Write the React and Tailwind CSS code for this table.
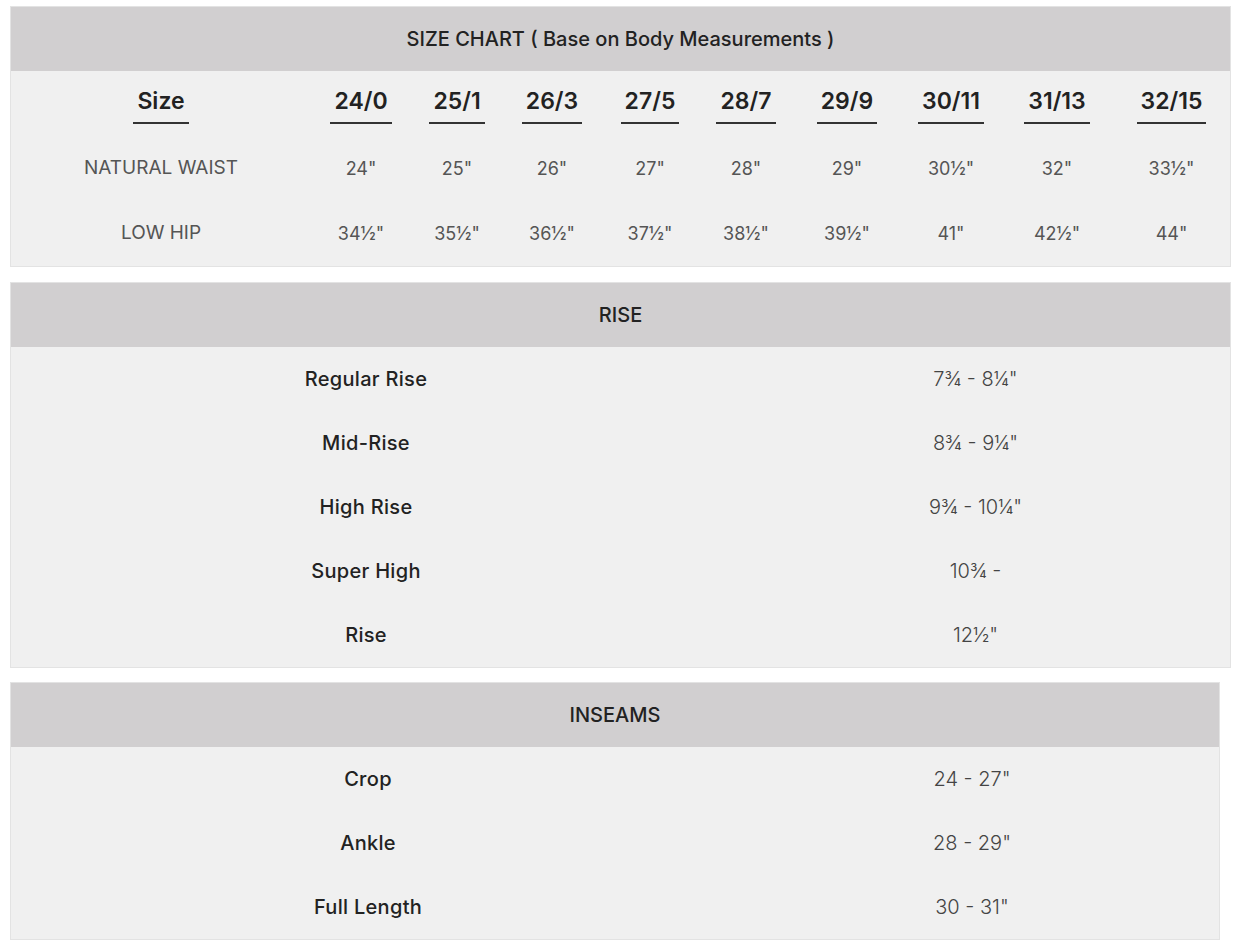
import React from "react";

const SIZES = ["24/0", "25/1", "26/3", "27/5", "28/7", "29/9", "30/11", "31/13", "32/15"];

const MEASUREMENTS = [
  {
    label: "NATURAL WAIST",
    values: ["24\"", "25\"", "26\"", "27\"", "28\"", "29\"", "30½\"", "32\"", "33½\""],
  },
  {
    label: "LOW HIP",
    values: ["34½\"", "35½\"", "36½\"", "37½\"", "38½\"", "39½\"", "41\"", "42½\"", "44\""],
  },
];

const RISES = [
  ["Regular Rise", "7¾ - 8¼\""],
  ["Mid-Rise", "8¾ - 9¼\""],
  ["High Rise", "9¾ - 10¼\""],
  ["Super High", "10¾ -"],
  ["Rise", "12½\""],
];

const INSEAMS = [
  ["Crop", "24 - 27\""],
  ["Ankle", "28 - 29\""],
  ["Full Length", "30 - 31\""],
];

const FONT = "font-['Inter','Liberation_Sans',sans-serif]";

function TableHeader({ children }) {
  return (
    <div className="h-16 flex items-center justify-center bg-[#d1cfd0] text-[20px] font-medium text-[#222]">
      {children}
    </div>
  );
}

function TwoColTable({ title, rows, cols, width }) {
  return (
    <div className={`${width} border border-[#e3e3e3] bg-[#f0f0f0]`}>
      <TableHeader>{title}</TableHeader>
      {rows.map(([label, value]) => (
        <div key={label} className={`grid ${cols} h-16 items-center text-center`}>
          <span className="text-[20px] font-medium text-[#222] tracking-[0.3px]">{label}</span>
          <span className="text-[20px] font-light text-[#444]">{value}</span>
        </div>
      ))}
    </div>
  );
}

export default function App() {
  const grid =
    "grid grid-cols-[300px_100px_92px_98px_98px_94px_108px_100px_112px_1fr] items-center text-center";

  return (
    <div className={`min-h-screen bg-white pl-[10px] pt-[6px] ${FONT}`}>
      {/* Size chart */}
      <div className="w-[1221px] border border-[#e3e3e3] bg-[#f0f0f0]">
        <TableHeader>SIZE CHART ( Base on Body Measurements )</TableHeader>
        <div className={`${grid} h-[65px]`}>
          {["Size", ...SIZES].map((s) => (
            <div key={s} className="flex justify-center pt-1">
              <span className="px-1 pb-1.5 border-b-2 border-[#333] text-[23px] font-semibold text-[#222] leading-tight">
                {s}
              </span>
            </div>
          ))}
        </div>
        {MEASUREMENTS.map((row) => (
          <div key={row.label} className={`${grid} h-[65px]`}>
            <span className="text-[19px] text-[#555]">{row.label}</span>
            {row.values.map((v, i) => (
              <span key={i} className="text-[18px] text-[#555]">
                {v}
              </span>
            ))}
          </div>
        ))}
      </div>

      <div className="mt-[15px]">
        <TwoColTable
          title="RISE"
          rows={RISES}
          cols="grid-cols-[710px_1fr]"
          width="w-[1221px]"
        />
      </div>

      <div className="mt-[14px]">
        <TwoColTable
          title="INSEAMS"
          rows={INSEAMS}
          cols="grid-cols-[714px_1fr]"
          width="w-[1210px]"
        />
      </div>
    </div>
  );
}
